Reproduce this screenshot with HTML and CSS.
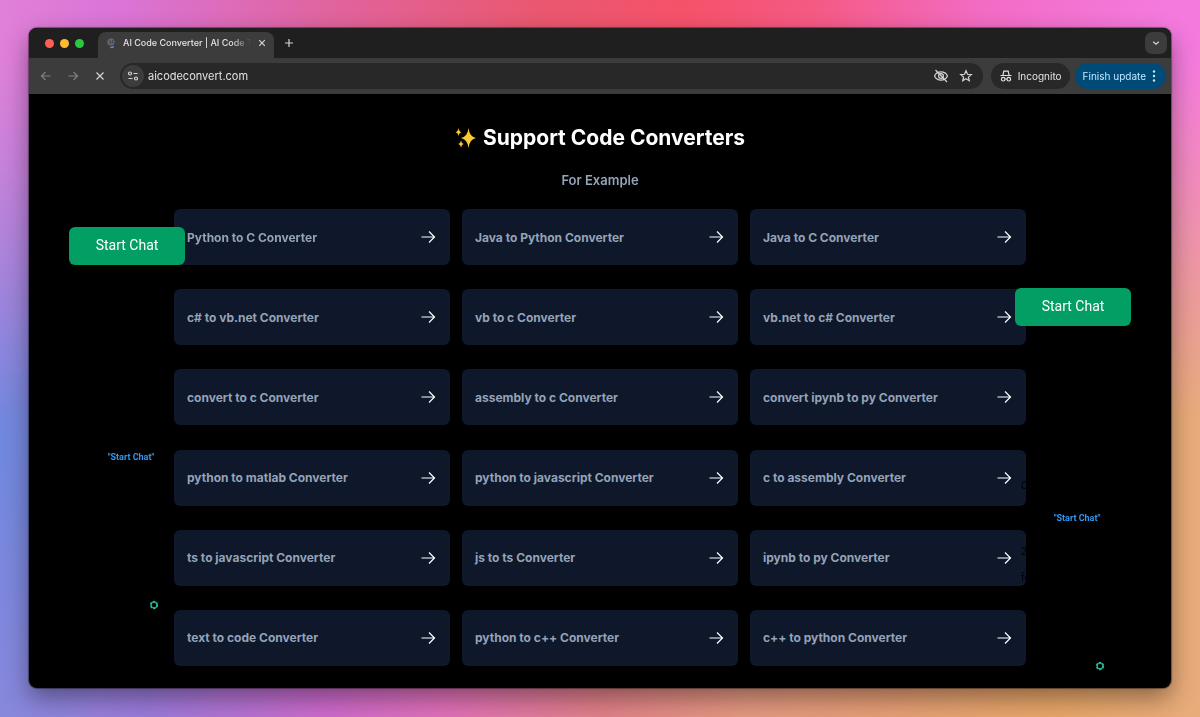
FILE: index.html
```html
<!DOCTYPE html>
<html lang="en">
<head>
<meta charset="utf-8">
<meta name="viewport" content="width=device-width, initial-scale=1">
<title>AI Code Converter</title>
<link rel="stylesheet" href="styles.css">
</head>
<body class="desktop">
<svg class="sprite" aria-hidden="true">
  <symbol id="arrow" viewBox="0 0 16 16"><path d="M1.500 8h13M9 2.500 14.500 8 9 13.500"/></symbol>
  <symbol id="knot" viewBox="0 0 10 10"><circle cx="5" cy="5" r="3.400" stroke-width="1.600" stroke-dasharray="2.700 .86"/><circle cx="5" cy="5" r="2.800" stroke-width="1"/></symbol>
</svg>
<div class="window">
  <header class="tabstrip">
    <div class="lights"><span class="light light-close"></span><span class="light light-min"></span><span class="light light-max"></span></div>
    <div class="tab">
      <svg class="favicon" viewBox="0 0 12 12"><circle cx="6" cy="5" r="3.600" fill="#66696f"/><path d="M4 3.500 6 5l-1 2M8 3l-1 2 1.500 1.500" stroke="#3c3c3c" fill="none"/><path d="M5.500 10.200c1 .6 2.500.3 3-.8" stroke="#5a93e8" stroke-width="1.400" fill="none"/></svg>
      <span class="tab-title">AI Code Converter | AI Code T</span>
      <button class="icon-btn" aria-label="Close tab"><svg class="ico" viewBox="0 0 16 16"><path d="m5.200 5.200 5.600 5.600M10.800 5.200l-5.600 5.600"/></svg></button>
    </div>
    <button class="icon-btn" aria-label="New tab"><svg class="ico" viewBox="0 0 16 16"><path d="M8 4v8M4 8h8"/></svg></button>
    <button class="icon-btn tab-search" aria-label="Search tabs"><svg class="ico" viewBox="0 0 16 16"><path d="M5.200 6.700 8 9.300l2.800-2.600"/></svg></button>
  </header>
  <nav class="toolbar">
    <div class="nav-buttons">
      <button class="icon-btn dim" aria-label="Back"><svg class="ico" viewBox="0 0 16 16"><path d="M12.500 8h-9M7.500 4l-4 4 4 4"/></svg></button>
      <button class="icon-btn dim" aria-label="Forward"><svg class="ico" viewBox="0 0 16 16"><path d="M3.500 8h9M8.500 4l4 4-4 4"/></svg></button>
      <button class="icon-btn" aria-label="Stop"><svg class="ico" viewBox="0 0 16 16"><path d="m4.500 4.500 7 7M11.500 4.500l-7 7"/></svg></button>
    </div>
    <div class="omnibox">
      <button class="icon-btn site-info" aria-label="Site information"><svg class="ico" viewBox="0 0 16 16"><circle cx="5" cy="5.500" r="1.500"/><path d="M8.500 5.500h4M3.500 10.500h4"/><circle cx="11" cy="10.500" r="1.500"/></svg></button>
      <input class="address" aria-label="Address" value="aicodeconvert.com">
      <button class="icon-btn" aria-label="Third-party cookies blocked"><svg class="ico" viewBox="0 0 16 16"><path d="M1.500 8C4 2.500 12 2.500 14.500 8 12 13.500 4 13.500 1.500 8Z"/><circle cx="8" cy="8" r="2.400"/><path d="m2.500 2 11.500 12"/></svg></button>
      <button class="icon-btn" aria-label="Bookmark this page"><svg class="ico" viewBox="0 0 16 16"><path d="m8 2.800 1.500 3.500 3.800.3-2.900 2.500.9 3.700L8 10.800l-3.300 2 .9-3.700-2.900-2.500 3.800-.3Z"/></svg></button>
    </div>
    <button class="pill"><svg class="ico" viewBox="0 0 16 16"><path d="M5 7 5.800 3.200h4.400L11 7M2.500 7.500h11"/><circle cx="5.200" cy="11.200" r="1.800"/><circle cx="10.800" cy="11.200" r="1.800"/><path d="M7 11h2"/></svg>Incognito</button>
    <button class="pill pill-update">Finish update<svg class="dots" viewBox="0 0 4 14"><circle cx="2" cy="2.500" r="1.200"/><circle cx="2" cy="7" r="1.200"/><circle cx="2" cy="11.500" r="1.200"/></svg></button>
  </nav>
  <main class="page">
    <h1 class="title"><svg class="sparkles" viewBox="0 0 22 22"><path d="M13.500 1q.9 8.600 7.500 10-6.600 1.400-7.500 10-.9-8.600-7.500-10 6.600-1.400 7.500-10ZM3.500 1q.4 3.600 3 4.200-2.600.6-3 4.200-.4-3.600-3-4.200 2.600-.6 3-4.200ZM6 13q.4 3.400 2.800 4Q6.400 17.600 6 21q-.4-3.400-2.800-4Q5.600 16.400 6 13Z"/></svg>Support Code Converters</h1>
    <h2 class="subtitle">For Example</h2>
    <div class="grid">
      <a class="card" href="#">Python to C Converter<svg class="arrow"><use href="#arrow"/></svg></a>
      <a class="card" href="#">Java to Python Converter<svg class="arrow"><use href="#arrow"/></svg></a>
      <a class="card" href="#">Java to C Converter<svg class="arrow"><use href="#arrow"/></svg></a>
      <a class="card" href="#">c# to vb.net Converter<svg class="arrow"><use href="#arrow"/></svg></a>
      <a class="card" href="#">vb to c Converter<svg class="arrow"><use href="#arrow"/></svg></a>
      <a class="card" href="#">vb.net to c# Converter<svg class="arrow"><use href="#arrow"/></svg></a>
      <a class="card" href="#">convert to c Converter<svg class="arrow"><use href="#arrow"/></svg></a>
      <a class="card" href="#">assembly to c Converter<svg class="arrow"><use href="#arrow"/></svg></a>
      <a class="card" href="#">convert ipynb to py Converter<svg class="arrow"><use href="#arrow"/></svg></a>
      <a class="card" href="#">python to matlab Converter<svg class="arrow"><use href="#arrow"/></svg></a>
      <a class="card" href="#">python to javascript Converter<svg class="arrow"><use href="#arrow"/></svg></a>
      <a class="card" href="#">c to assembly Converter<svg class="arrow"><use href="#arrow"/></svg></a>
      <a class="card" href="#">ts to javascript Converter<svg class="arrow"><use href="#arrow"/></svg></a>
      <a class="card" href="#">js to ts Converter<svg class="arrow"><use href="#arrow"/></svg></a>
      <a class="card" href="#">ipynb to py Converter<svg class="arrow"><use href="#arrow"/></svg></a>
      <a class="card" href="#">text to code Converter<svg class="arrow"><use href="#arrow"/></svg></a>
      <a class="card" href="#">python to c++ Converter<svg class="arrow"><use href="#arrow"/></svg></a>
      <a class="card" href="#">c++ to python Converter<svg class="arrow"><use href="#arrow"/></svg></a>
    </div>
    <aside class="ad ad-left">
      <button class="ad-button">Start Chat</button>
      <a class="ad-link" href="#">"Start Chat"</a>
      <svg class="knot"><use href="#knot"/></svg>
    </aside>
    <aside class="ad ad-right">
      <button class="ad-button">Start Chat</button>
      <a class="ad-link" href="#">"Start Chat"</a>
      <svg class="knot"><use href="#knot"/></svg>
      <div class="ad-copy"><span>C</span><span class="ad-copy-gap">2</span><span>fe</span></div>
    </aside>
  </main>
</div>
</body>
</html>
```

FILE: styles.css
```css
* { box-sizing: border-box; }

.desktop {
  margin: 0;
  min-height: 100vh;
  padding: 28px 29px 29px;
  display: flex;
  font-family: Inter, "Liberation Sans", sans-serif;
  background:
    radial-gradient(ellipse 12% 50% at 0% 62%, #7088de 0%, #7088de00 100%),
    linear-gradient(90deg, #8f88da 0%, #9a7ada 12%, #cc6acc 27%, #e070b8 37%, #e08088 50%, #e49880 62%, #e8a668 88%, #e8ac7c 100%);
}

/* Pink wash that fades out down the wallpaper */
.desktop::before {
  content: "";
  position: fixed;
  inset: 0;
  z-index: -1;
  background: linear-gradient(90deg, #e080d9 0%, #da74d6 10%, #e0649f 27%, #e9586f 45%, #f5526a 57%, #f55a85 68%, #f26cc4 82%, #f47ade 97%);
  mask-image: linear-gradient(#000 8%, transparent 58%);
}

.sprite { position: absolute; width: 0; height: 0; }

.window {
  flex: 1;
  min-width: 0;
  display: flex;
  flex-direction: column;
  overflow: hidden;
  border-radius: 8px;
  background: #000;
  box-shadow: 0 0 1px 1px #0006, 0 10px 24px #0006;
}

button {
  border: 0;
  padding: 0;
  background: none;
  color: inherit;
  font: inherit;
}

.icon-btn {
  width: 22px;
  height: 22px;
  display: grid;
  place-items: center;
  flex: none;
  border-radius: 50%;
  color: #d4d4d4;
}
.dim { color: #808080; }

.ico {
  width: 16px;
  height: 16px;
  fill: none;
  stroke: currentColor;
  stroke-width: 1.2;
}

.tabstrip {
  display: flex;
  align-items: center;
  height: 30px;
  padding: 0 4px 0 16px;
  background: #1f1f1f;
}
.lights { display: flex; gap: 6px; margin-right: 14px; }
.light { width: 9px; height: 9px; border-radius: 50%; }
.light-close { background: #ff5f57; }
.light-min { background: #febc2e; }
.light-max { background: #28c840; }

.tab {
  align-self: flex-end;
  display: flex;
  align-items: center;
  width: 176px;
  height: 26px;
  margin-right: 4px;
  padding: 0 1px 4px 7px;
  border-radius: 8px 8px 0 0;
  background: #3c3c3c;
  color: #e3e3e3;
  font-size: 9px;
  font-weight: 500;
  line-height: 14px;
}
.favicon { width: 12px; height: 12px; margin-right: 6px; }
.tab-title {
  flex: 1;
  overflow: hidden;
  white-space: nowrap;
  mask-image: linear-gradient(90deg, #000 85%, transparent);
}
.tab-search { margin-left: auto; border-radius: 7px; background: #3c3c3c; }

.toolbar {
  display: flex;
  align-items: center;
  gap: 5px;
  height: 36px;
  padding: 0 5px 0 6px;
  background: #3c3c3c;
  color: #e3e3e3;
  font-size: 10px;
}
.nav-buttons { display: flex; gap: 5px; margin-right: 4px; }
.omnibox {
  flex: 1;
  min-width: 0;
  display: flex;
  align-items: center;
  gap: 3px;
  height: 26px;
  margin-right: 3px;
  padding: 0 6px 0 2px;
  border-radius: 13px;
  background: #282828;
}
.site-info { background: #3c3c3c; }
.address {
  flex: 1;
  min-width: 0;
  border: 0;
  padding: 0 0 0 1px;
  background: none;
  color: #e3e3e3;
  font: 11px Inter, sans-serif;
}
.pill {
  display: flex;
  align-items: center;
  gap: 4px;
  height: 26px;
  padding: 0 8px 0 7px;
  border-radius: 13px;
  background: #282828;
  white-space: nowrap;
}
.pill-update { background: #004a77; color: #c2e7ff; gap: 6px; padding: 0 10px 0 8px; }
.dots { width: 4px; height: 14px; fill: currentColor; }

.page {
  position: relative;
  flex: 1;
  display: flex;
  flex-direction: column;
  padding: 28px 24px 22px;
  text-align: center;
}
.title {
  display: flex;
  align-items: center;
  justify-content: center;
  gap: 6px;
  margin: 0;
  color: #fff;
  font-size: 21px;
  font-weight: 700;
  line-height: 32px;
}
.sparkles { width: 22px; height: 22px; fill: #fcc934; }
.subtitle {
  margin: 16px 0 19px;
  color: #94a3b8;
  font-size: 13px;
  font-weight: 600;
  line-height: 20px;
}
.grid {
  flex: 1;
  display: grid;
  grid-template-columns: repeat(3, minmax(0, 1fr));
  align-content: space-between;
  gap: 24px 12px;
  width: 100%;
  max-width: 852px;
  margin: 0 auto;
}
.card {
  display: flex;
  align-items: center;
  justify-content: space-between;
  height: 56px;
  padding: 0 14px 0 13px;
  border-radius: 6px;
  background: #0f172a;
  color: #94a3b8;
  font-size: 12px;
  font-weight: 700;
  text-decoration: none;
}
.arrow { width: 16px; height: 16px; fill: none; stroke: #fff; stroke-width: 1.2; }

/* Side ads float over the page content */
.ad {
  position: absolute;
  display: flex;
  flex-direction: column;
  width: 116px;
  font-family: Roboto, sans-serif;
}
.ad-left { left: 40px; top: 133px; }
.ad-right { right: 40px; top: 194px; }
.ad-button {
  height: 38px;
  padding-bottom: 2px;
  border-radius: 6px;
  background: #039e63;
  color: #fff;
  font-size: 14px;
}
.ad-link {
  margin: 186px 0 137px 8px;
  color: #2f97f0;
  font-size: 9px;
  font-weight: 700;
  line-height: 12px;
  text-decoration: none;
}
.knot { width: 10px; height: 10px; margin-left: 80px; fill: none; stroke: #2bb595; }
.ad-copy {
  position: absolute;
  left: 6px;
  top: 190px;
  display: flex;
  flex-direction: column;
  color: #000;
  font-size: 10px;
  line-height: 16px;
  text-align: left;
}
.ad-copy-gap { margin: 50px 0 10px; }
```
